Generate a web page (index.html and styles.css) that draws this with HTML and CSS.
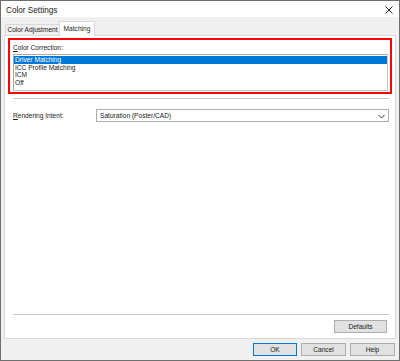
FILE: index.html
```html
<!DOCTYPE html>
<html>
<head>
<meta charset="utf-8">
<link rel="stylesheet" href="styles.css">
</head>
<body>
<div class="window">
  <div class="titlebar">
    <span class="title">Color Settings</span>
    <svg class="close" width="8" height="8" viewBox="0 0 8 8"><path d="M0.5 0.5 L7.5 7.5 M7.5 0.5 L0.5 7.5" stroke="#222" stroke-width="1" fill="none"/></svg>
  </div>
  <div class="body">
    <div class="tabs">
      <div class="tab">Color Adjustment</div>
      <div class="tab active">Matching</div>
    </div>
    <div class="panel">
      <div class="highlight">
        <div class="label"><u>C</u>olor Correction:</div>
        <div class="listbox">
          <div class="item selected">Driver Matching</div>
          <div class="item">ICC Profile Matching</div>
          <div class="item">ICM</div>
          <div class="item">Off</div>
        </div>
      </div>
      <div class="sep top-sep"></div>
      <div class="row">
        <div class="label row-label"><u>R</u>endering Intent:</div>
        <div class="select">
          <span>Saturation (Poster/CAD)</span>
          <svg class="chev" width="7" height="5" viewBox="0 0 7 5"><path d="M0.5 1 L3.5 4 L6.5 1" stroke="#333" stroke-width="1" fill="none"/></svg>
        </div>
      </div>
      <div class="spacer"></div>
      <div class="sep bottom-sep"></div>
      <div class="defaults-row">
        <div class="btn defaults">Defaults</div>
      </div>
    </div>
    <div class="footer">
      <div class="btn ok">OK</div>
      <div class="btn">Cancel</div>
      <div class="btn">Help</div>
    </div>
  </div>
</div>
</body>
</html>
```
FILE: styles.css
```css
* { box-sizing: border-box; }
html, body { margin: 0; padding: 0; }
body {
  font-family: "Liberation Sans", Arial, sans-serif;
  font-size: 6.6px;
  color: #1a1a1a;
  background: #fff;
}
.window {
  width: 400px;
  height: 361px;
  border: 1px solid #6e6e6e;
  display: flex;
  flex-direction: column;
  background: #f0f0f0;
  white-space: nowrap;
}
.titlebar {
  height: 16px;
  background: #fff;
  display: flex;
  align-items: center;
  justify-content: space-between;
  padding: 0 6px 0 5px;
}
.title {
  font-size: 8.2px;
  margin-top: 2px;
}
.close { margin-top: 2px; }
.body {
  flex: 1;
  display: flex;
  flex-direction: column;
  padding: 4px 3px 0 3px;
}
.tabs {
  display: flex;
  align-items: flex-end;
  height: 14px;
  padding-left: 1px;
  position: relative;
  z-index: 1;
}
.tab {
  height: 11px;
  line-height: 10px;
  padding: 0;
  border: 1px solid #d9d9d9;
  border-bottom: none;
  background: #f0f0f0;
  width: 55px;
  text-align: center;
}
.tab.active {
  height: 15px;
  line-height: 13px;
  width: 36px;
  background: #fff;
  margin-left: -1px;
  margin-bottom: -1px;
}
.panel {
  height: 304px;
  background: #fff;
  border: 1px solid #d9d9d9;
  display: flex;
  flex-direction: column;
  padding: 2px 3px 0 3px;
}
.highlight {
  border: 2px solid #ff0000;
  height: 56px;
  padding: 3px 2px 0 3px;
}
.label { line-height: 9px; }
.listbox {
  margin-top: 2px;
  height: 37px;
  border: 1px solid #a9a9a9;
  border-right-color: #c8c8c8;
  border-bottom-color: #c8c8c8;
  padding: 1px 0;
}
.item {
  height: 7.6px;
  line-height: 7.6px;
  padding-left: 1px;
}
.item.selected {
  background: #0078d7;
  color: #fff;
}
.sep {
  height: 1px;
  background: #c9c9c9;
  margin: 0 3px 0 5px;
}
.top-sep { margin-top: 4px; }
.row {
  display: flex;
  align-items: center;
  margin-top: 10px;
  padding-left: 5px;
  padding-right: 3px;
}
.row-label { width: 83px; }
.select {
  flex: 1;
  height: 13px;
  border: 1px solid #adadad;
  display: flex;
  align-items: center;
  justify-content: space-between;
  padding: 0 3px 0 3px;
  background: #fff;
}
.chev { margin-top: 1px; }
.spacer { flex: 1; }
.bottom-sep { margin-bottom: 5px; }
.defaults-row {
  display: flex;
  justify-content: flex-end;
  padding-right: 5px;
  margin-bottom: 5px;
}
.btn {
  height: 13px;
  width: 45px;
  border: 1px solid #adadad;
  background: #e1e1e1;
  display: flex;
  align-items: center;
  justify-content: center;
}
.defaults { width: 53px; }
.footer {
  display: flex;
  justify-content: flex-end;
  gap: 4px;
  padding-top: 4px;
  padding-right: 1px;
}
.btn.ok {
  border: 1px solid #0078d7;
  width: 44px;
}
```
